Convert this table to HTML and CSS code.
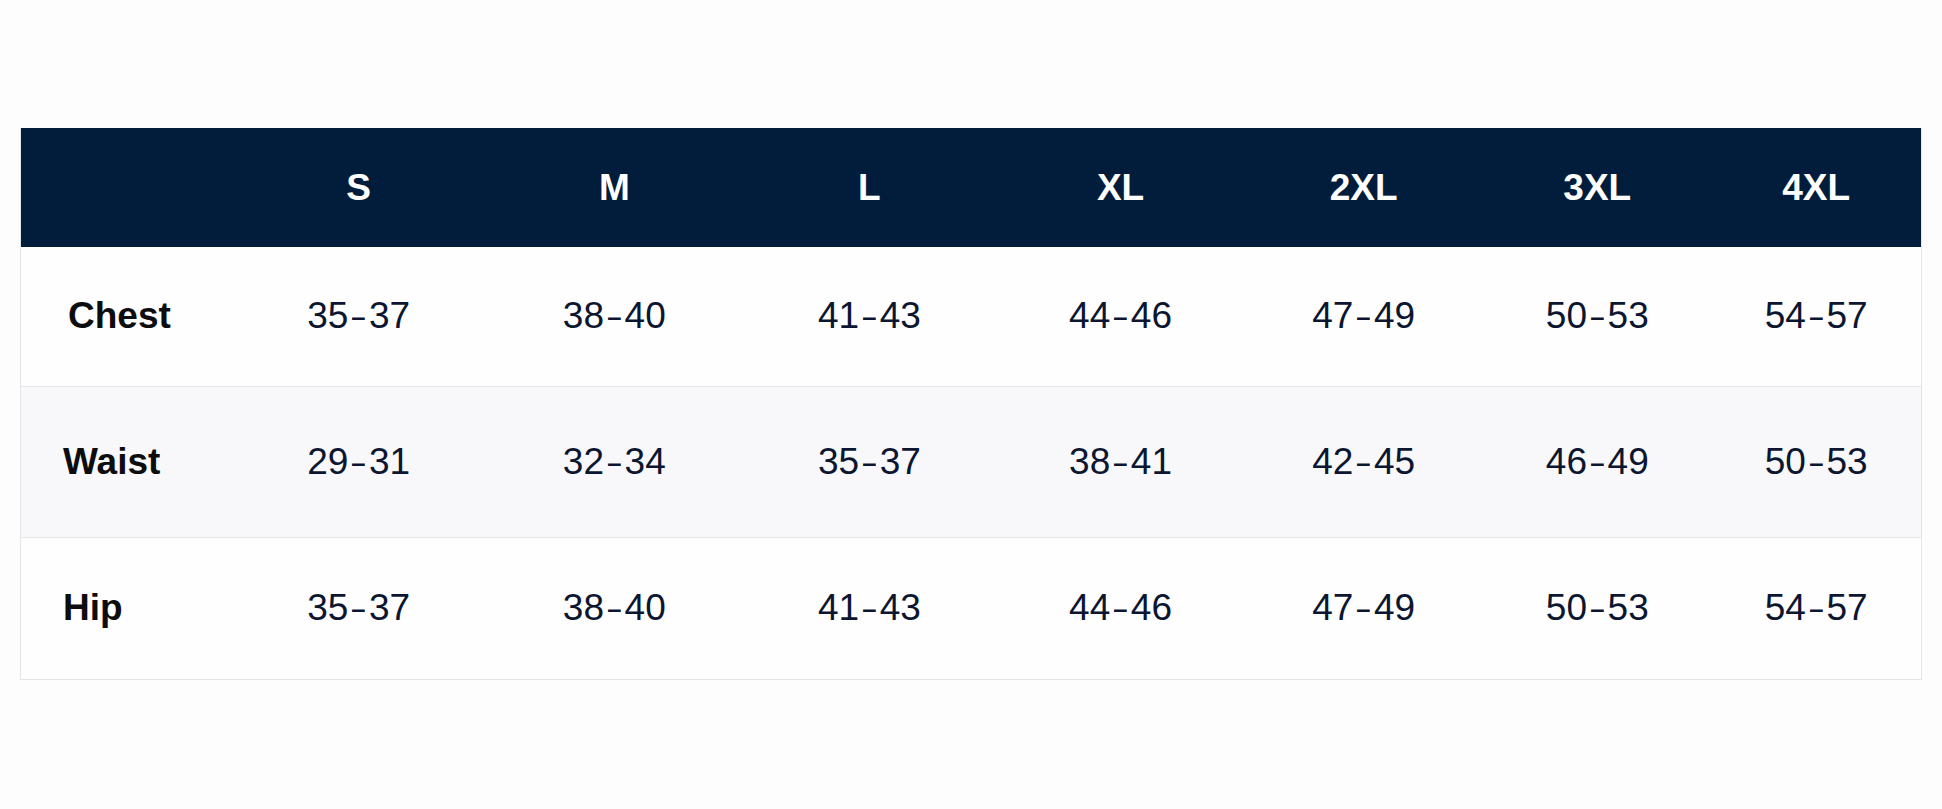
FILE: index.html
```html
<!DOCTYPE html>
<html lang="en">
<head>
<meta charset="utf-8">
<title>Size Chart</title>
<link rel="stylesheet" href="styles.css">
</head>
<body>
<main class="page">
  <table class="size-chart">
    <colgroup>
      <col class="col-label">
      <col class="col-s">
      <col class="col-m">
      <col class="col-l">
      <col class="col-xl">
      <col class="col-2xl">
      <col class="col-3xl">
      <col class="col-4xl">
    </colgroup>
    <thead>
      <tr class="head-row">
        <th class="corner"></th>
        <th>S</th>
        <th>M</th>
        <th>L</th>
        <th>XL</th>
        <th>2XL</th>
        <th>3XL</th>
        <th>4XL</th>
      </tr>
    </thead>
    <tbody>
      <tr class="row row-chest">
        <th scope="row" class="label label-chest">Chest</th>
        <td>35<span class="dash">–</span>37</td>
        <td>38<span class="dash">–</span>40</td>
        <td>41<span class="dash">–</span>43</td>
        <td>44<span class="dash">–</span>46</td>
        <td>47<span class="dash">–</span>49</td>
        <td>50<span class="dash">–</span>53</td>
        <td>54<span class="dash">–</span>57</td>
      </tr>
      <tr class="row row-waist">
        <th scope="row" class="label">Waist</th>
        <td>29<span class="dash">–</span>31</td>
        <td>32<span class="dash">–</span>34</td>
        <td>35<span class="dash">–</span>37</td>
        <td>38<span class="dash">–</span>41</td>
        <td>42<span class="dash">–</span>45</td>
        <td>46<span class="dash">–</span>49</td>
        <td>50<span class="dash">–</span>53</td>
      </tr>
      <tr class="row row-hip">
        <th scope="row" class="label">Hip</th>
        <td>35<span class="dash">–</span>37</td>
        <td>38<span class="dash">–</span>40</td>
        <td>41<span class="dash">–</span>43</td>
        <td>44<span class="dash">–</span>46</td>
        <td>47<span class="dash">–</span>49</td>
        <td>50<span class="dash">–</span>53</td>
        <td>54<span class="dash">–</span>57</td>
      </tr>
    </tbody>
  </table>
</main>
</body>
</html>
```

FILE: styles.css
```css
html, body {
  margin: 0;
  padding: 0;
  background: #fdfdfd;
}

body {
  font-family: "Liberation Sans", Arial, Helvetica, sans-serif;
}

.page {
  padding: 128px 20px 0 20px;
}

.size-chart {
  width: 1902px;
  table-layout: fixed;
  border-collapse: collapse;
  border: 1px solid #e4e5e8;
  border-top: none;
}

.col-label { width: 210px; }
.col-s { width: 256px; }
.col-m { width: 255px; }
.col-l { width: 255px; }
.col-xl { width: 247px; }
.col-2xl { width: 239px; }
.col-3xl { width: 228px; }
.col-4xl { width: 210px; }

.head-row {
  height: 119px;
  background: #021d3b;
}

.head-row th {
  color: #ffffff;
  font-size: 37px;
  font-weight: 700;
  text-align: center;
  padding: 0;
  vertical-align: middle;
}

.row td,
.row th {
  padding: 0;
  vertical-align: middle;
}

.row td {
  text-align: center;
  font-size: 37px;
  font-weight: 400;
  color: #0c1630;
}

.dash {
  display: inline-block;
  transform: scaleX(0.62);
}

.row + .row {
  border-top: 1px solid #e6e7ea;
}

.row-chest { height: 139px; background: #fefefe; }
.row-waist { height: 151px; background: #f8f8fa; }
.row-hip { height: 142px; background: #fefefe; }

.row .label {
  text-align: left;
  padding-left: 42px;
  font-size: 37px;
  font-weight: 700;
  color: #0d0d0f;
}

.row .label-chest {
  padding-left: 47px;
}
```
